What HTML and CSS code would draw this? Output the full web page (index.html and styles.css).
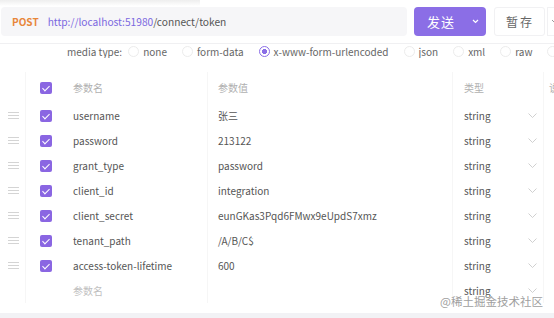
FILE: index.html
```html
<!DOCTYPE html>
<html lang="zh-CN">
<head>
    <meta charset="UTF-8">
    <title>connect/token</title>
    <link rel="stylesheet" href="styles.css">
</head>
<body>
    <div class="topbar">
        <div class="url-box">
            <span class="method">POST</span>
            <span class="url"><span class="host">http://localhost:51980</span>/connect/token</span>
        </div>
        <button class="send">
            <span class="send-text">发送</span>
            <svg class="send-arrow" width="7" height="5" viewBox="0 0 7 5"><polyline points="1,1 3.5,3.5 6,1" fill="none" stroke="#fff" stroke-width="1.2"/></svg>
        </button>
        <button class="save">暂存</button>
        <div class="more">
            <svg width="8" height="5" viewBox="0 0 8 5"><polyline points="1,1 4,4 7,1" fill="none" stroke="#999" stroke-width="1"/></svg>
        </div>
    </div>

    <div class="media">
        <span class="media-label">media type:</span>
        <label class="radio"><i></i>none</label>
        <label class="radio"><i></i>form-data</label>
        <label class="radio checked"><i></i>x-www-form-urlencoded</label>
        <label class="radio"><i></i>json</label>
        <label class="radio"><i></i>xml</label>
        <label class="radio"><i></i>raw</label>
        <label class="radio"><i></i></label>
    </div>

    <div class="params">
        <div class="row head">
            <div class="cell handle"></div>
            <div class="cell check"><span class="box"></span></div>
            <div class="cell name">参数名</div>
            <div class="cell value">参数值</div>
            <div class="cell type">类型</div>
            <div class="cell extra">说</div>
        </div>
        <div id="rows"></div>
        <div class="row">
            <div class="cell handle"></div>
            <div class="cell check"></div>
            <div class="cell name placeholder">参数名</div>
            <div class="cell value"></div>
            <div class="cell type">string<svg class="chev" width="9" height="5" viewBox="0 0 9 5"><polyline points="0.5,0.5 4.5,4.5 8.5,0.5" fill="none" stroke="#c4c4c4" stroke-width="0.8"/></svg></div>
            <div class="cell extra"></div>
        </div>
    </div>

    <div class="footer-band"></div>
    <div class="watermark">@稀土掘金技术社区</div>

    <script>
        const params = [
            ["username", "张三"],
            ["password", "213122"],
            ["grant_type", "password"],
            ["client_id", "integration"],
            ["client_secret", "eunGKas3Pqd6FMwx9eUpdS7xmz"],
            ["tenant_path", "/A/B/C$"],
            ["access-token-lifetime", "600"]
        ];

        const rows = document.getElementById("rows");
        params.forEach(p => {
            const row = document.createElement("div");
            row.className = "row";
            row.innerHTML =
                '<div class="cell handle"><span class="grip"></span></div>' +
                '<div class="cell check"><span class="box"></span></div>' +
                '<div class="cell name">' + p[0] + '</div>' +
                '<div class="cell value">' + p[1] + '</div>' +
                '<div class="cell type">string<svg class="chev" width="9" height="5" viewBox="0 0 9 5"><polyline points="0.5,0.5 4.5,4.5 8.5,0.5" fill="none" stroke="#c4c4c4" stroke-width="0.8"/></svg></div>' +
                '<div class="cell extra"></div>';
            rows.appendChild(row);
        });
    </script>
</body>
</html>
```

FILE: styles.css
```css
body, html {
    margin: 0;
    height: 100%;
    background-color: #ffffff;
    color: #555;
    font-family: "Noto Sans CJK SC", "Noto Sans", sans-serif;
    font-size: 10px;
    overflow: hidden;
    white-space: nowrap;
}

body {
    position: relative;
    background: linear-gradient(to bottom, #eeeeee 0, #ffffff 6px) no-repeat;
    background-size: 200px 7px;
}

.topbar {
    display: flex;
    align-items: stretch;
    height: 29px;
    padding-top: 7px;
    padding-bottom: 7px;
    border-bottom: 1px solid #f0f0f2;
}

.url-box {
    width: 406px;
    flex-shrink: 0;
    margin-left: 1px;
    display: flex;
    align-items: center;
    background-color: #f6f6f8;
    border-radius: 4px;
    padding-left: 11px;
    box-sizing: border-box;
}

.method {
    color: #e8863a;
    font-weight: bold;
    font-size: 10px;
    margin-right: 9px;
}

.url {
    color: #555;
    font-size: 10.2px;
}

.host {
    color: #7b68e0;
}

button {
    border: none;
    font-family: inherit;
    cursor: pointer;
    flex-shrink: 0;
}

.send {
    width: 72px;
    margin-left: 7px;
    background-color: #8b6ee6;
    color: #fff;
    border-radius: 4px;
    display: flex;
    align-items: center;
    padding: 0 0 0 13px;
    font-size: 13px;
}

.send-text {
    letter-spacing: 1px;
}

.send-arrow {
    margin-left: 17px;
}

.save {
    width: 51px;
    margin-left: 8px;
    background-color: #fff;
    border: 1px solid #f1f1f3;
    border-radius: 3px;
    color: #666;
    font-size: 12px;
    letter-spacing: 2px;
    padding: 0 0 0 1px;
}

.more {
    margin-left: 2px;
    width: 20px;
    flex-shrink: 0;
    border: 1px solid #f1f1f3;
    display: flex;
    align-items: center;
    padding-left: 3px;
}

.media {
    display: flex;
    align-items: center;
    height: 14px;
    padding-left: 67px;
    color: #666;
    gap: 15px;
    overflow: hidden;
}

.media-label {
    margin-right: -9px;
}

.radio {
    display: flex;
    align-items: center;
    gap: 4px;
    flex-shrink: 0;
}

.radio i {
    display: inline-block;
    width: 9px;
    height: 9px;
    border: 1px solid #ececec;
    border-radius: 50%;
    box-sizing: content-box;
}

.radio.checked i {
    border-color: #8b6ee6;
    background: radial-gradient(circle, #8b6ee6 0, #8b6ee6 2.3px, #fff 2.8px);
}

.params {
    margin-top: 14px;
}

.row {
    display: flex;
    height: 25px;
    align-items: stretch;
}

.row.head {
    height: 31px;
    color: #b0b0b0;
}

.cell {
    display: flex;
    align-items: center;
    box-sizing: border-box;
    border-right: 1px solid #f6f6f6;
    flex-shrink: 0;
}

.handle {
    width: 26px;
    justify-content: center;
    padding-left: 1px;
}

.grip {
    width: 11px;
    height: 7px;
    border-top: 1px solid #d4d4d4;
    border-bottom: 1px solid #d4d4d4;
    background: linear-gradient(#d4d4d4, #d4d4d4) center / 100% 1px no-repeat;
    box-sizing: border-box;
}

.check {
    width: 36px;
    padding-left: 14px;
    border-right: none;
}

.box {
    width: 12px;
    height: 12px;
    border-radius: 2px;
    background-color: #8a66e2;
    position: relative;
}

.box::after {
    content: "";
    position: absolute;
    left: 4px;
    top: 2px;
    width: 3px;
    height: 6px;
    border-right: 1.5px solid #fff;
    border-bottom: 1.5px solid #fff;
    transform: rotate(45deg);
}

.name {
    width: 146px;
    padding-left: 11px;
}

.value {
    width: 245px;
    padding-left: 10px;
}

.type {
    width: 91px;
    padding-left: 11px;
}

.chev {
    margin-left: 37px;
}

.extra {
    flex: 1;
    padding-left: 5px;
    border-right: none;
    color: #b0b0b0;
}

.placeholder {
    color: #c0c0c0;
}

.footer-band {
    position: absolute;
    left: 0;
    right: 0;
    bottom: 0;
    height: 5px;
    background-color: #f2f2f5;
}

.watermark {
    position: absolute;
    left: 440px;
    top: 293px;
    font-size: 11.5px;
    color: #a0a0a0;
    text-shadow: 0 0 2px #fff;
}
```
